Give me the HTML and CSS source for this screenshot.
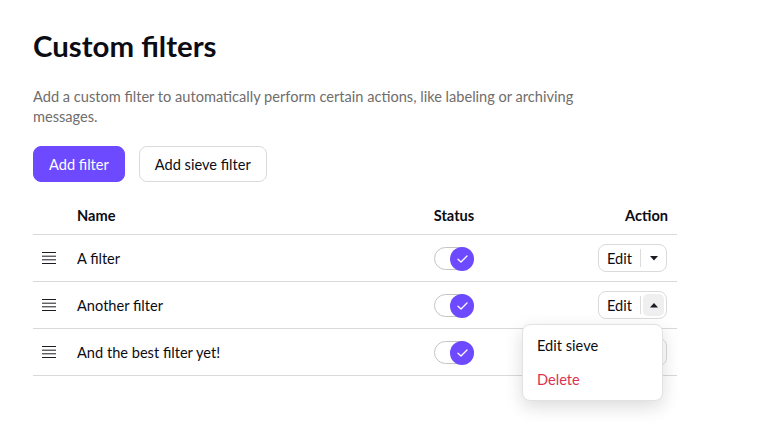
FILE: index.html
```html
<!DOCTYPE html>
<html lang="en">
<head>
<meta charset="utf-8">
<title>Custom filters</title>
<link rel="stylesheet" href="styles.css">
</head>
<body>
<main class="page">
  <h1 class="title">Custom filters</h1>
  <p class="desc">Add a custom filter to automatically perform certain actions, like labeling or archiving messages.</p>
  <div class="buttons">
    <button class="btn btn-primary">Add filter</button>
    <button class="btn btn-outline">Add sieve filter</button>
  </div>
  <div class="table">
    <div class="row head">
      <div class="cell"></div>
      <div class="cell">Name</div>
      <div class="cell center">Status</div>
      <div class="cell right">Action</div>
    </div>

    <div class="row">
      <div class="cell handle"><svg width="14" height="12" viewBox="0 0 14 12"><path d="M0 0.5H14M0 4.2H14M0 7.8H14M0 11.5H14" stroke="#1b1b22" stroke-width="1"/></svg></div>
      <div class="cell">A filter</div>
      <div class="cell center"><span class="toggle"><span class="knob"><svg width="11" height="8" viewBox="0 0 11 8"><path d="M1 4.2L4 7L10 1" fill="none" stroke="#fff" stroke-width="1.3" stroke-linecap="round" stroke-linejoin="round"/></svg></span></span></div>
      <div class="cell right">
        <div class="split">
          <span class="split-main">Edit</span><span class="split-sep"></span><span class="split-caret"><svg width="8" height="5" viewBox="0 0 8 5"><path d="M0 0H8L4 4.5Z" fill="#1b1b22"/></svg></span>
        </div>
      </div>
    </div>

    <div class="row">
      <div class="cell handle"><svg width="14" height="12" viewBox="0 0 14 12"><path d="M0 0.5H14M0 4.2H14M0 7.8H14M0 11.5H14" stroke="#1b1b22" stroke-width="1"/></svg></div>
      <div class="cell">Another filter</div>
      <div class="cell center"><span class="toggle"><span class="knob"><svg width="11" height="8" viewBox="0 0 11 8"><path d="M1 4.2L4 7L10 1" fill="none" stroke="#fff" stroke-width="1.3" stroke-linecap="round" stroke-linejoin="round"/></svg></span></span></div>
      <div class="cell right">
        <div class="split open">
          <span class="split-main">Edit</span><span class="split-sep"></span><span class="split-caret active"><svg width="8" height="5" viewBox="0 0 8 5"><path d="M0 4.5H8L4 0Z" fill="#1b1b22"/></svg></span>
          <div class="menu">
            <div class="menu-item">Edit sieve</div>
            <div class="menu-item danger">Delete</div>
          </div>
        </div>
      </div>
    </div>

    <div class="row">
      <div class="cell handle"><svg width="14" height="12" viewBox="0 0 14 12"><path d="M0 0.5H14M0 4.2H14M0 7.8H14M0 11.5H14" stroke="#1b1b22" stroke-width="1"/></svg></div>
      <div class="cell">And the best filter yet!</div>
      <div class="cell center"><span class="toggle"><span class="knob"><svg width="11" height="8" viewBox="0 0 11 8"><path d="M1 4.2L4 7L10 1" fill="none" stroke="#fff" stroke-width="1.3" stroke-linecap="round" stroke-linejoin="round"/></svg></span></span></div>
      <div class="cell right">
        <div class="split">
          <span class="split-main">Edit</span><span class="split-sep"></span><span class="split-caret"><svg width="8" height="5" viewBox="0 0 8 5"><path d="M0 0H8L4 4.5Z" fill="#1b1b22"/></svg></span>
        </div>
      </div>
    </div>
  </div>
</main>
</body>
</html>
```

FILE: styles.css
```css
* { box-sizing: border-box; }
html, body { margin: 0; padding: 0; background: #fff; min-height: 100%; }
body {
  font-family: Lato, "Noto Sans", sans-serif;
  color: #0c0c14;
  font-size: 14.6px;
}
.page {
  padding: 28px 33px 40px 33px;
  width: 710px;
  min-height: 436px;
}
.title {
  margin: 0;
  font-size: 29.4px;
  line-height: 36px;
  font-weight: 700;
}
.desc {
  margin: 23px 0 0 0;
  width: 580px;
  color: #706d6b;
  font-size: 14.6px;
  line-height: 19.5px;
}
.buttons {
  display: flex;
  gap: 14px;
  margin-top: 20px;
}
.btn {
  font-family: inherit;
  font-size: 14.6px;
  height: 36px;
  border-radius: 8px;
  padding: 0 15px;
  cursor: pointer;
}
.btn-primary {
  background: #6d4aff;
  color: #fff;
  border: 1px solid #6d4aff;
}
.btn-outline {
  background: #fff;
  color: #0c0c14;
  border: 1px solid #dadada;
}
.table {
  margin-top: 15px;
  width: 644px;
}
.row {
  display: grid;
  grid-template-columns: 44px 337px 80px 183px;
  height: 47px;
  border-bottom: 1px solid #d9d9d9;
  align-items: center;
}
.row.head {
  height: 38px;
  font-weight: 700;
}
.cell.center { text-align: center; display: flex; justify-content: center; }
.cell.right { display: flex; justify-content: flex-end; padding-right: 10px; }
.head .cell.right { padding-right: 9px; }
.handle { display: flex; padding-left: 9px; align-items: center; }
.handle svg { display: block; }
.toggle {
  position: relative;
  display: inline-block;
  width: 40px;
  height: 23px;
  border: 1px solid #c4c4c4;
  border-radius: 12px;
  background: #fff;
}
.knob {
  position: absolute;
  right: -1px;
  top: -1px;
  width: 24px;
  height: 24px;
  border-radius: 50%;
  background: #6d4aff;
  display: flex;
  align-items: center;
  justify-content: center;
}
.knob svg { display: block; }
.split {
  position: relative;
  display: flex;
  align-items: center;
  height: 28px;
  width: 69px;
  border: 1px solid #dadada;
  border-radius: 8px;
  background: #fff;
}
.split-main {
  padding-left: 8px;
  width: 41px;
  font-size: 14.6px;
}
.split-sep {
  width: 1px;
  height: 18px;
  background: #dcdcdc;
}
.split-caret {
  flex: 1;
  height: 22px;
  margin: 0 2px 0 2px;
  display: flex;
  align-items: center;
  justify-content: center;
  border-radius: 5px;
}
.split-caret svg { display: block; }
.split-caret.active { background: #efefef; }
.menu {
  position: absolute;
  top: 32px;
  right: 3px;
  width: 141px;
  padding: 4px 0 3px 0;
  background: #fff;
  border: 1px solid #e2e2e2;
  border-radius: 8px;
  box-shadow: 0 6px 18px rgba(0, 0, 0, 0.14);
  z-index: 10;
}
.menu-item {
  height: 34px;
  line-height: 34px;
  padding-left: 14px;
  font-size: 14.6px;
  color: #0c0c14;
}
.menu-item.danger { color: #dc3251; }
```
